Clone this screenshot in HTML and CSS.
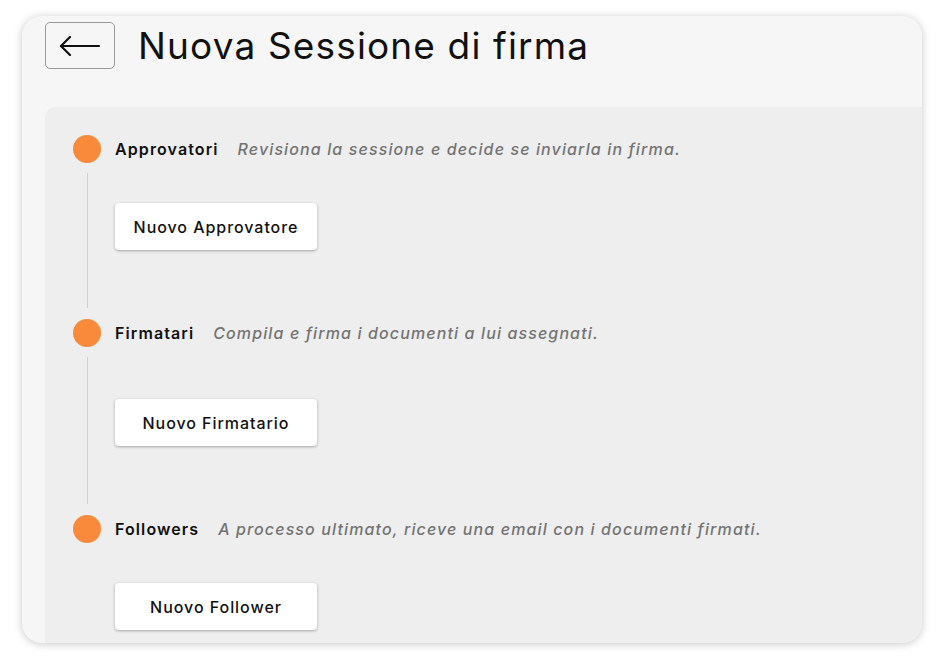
FILE: index.html
```html
<!DOCTYPE html>
<html lang="it">
<head>
<meta charset="utf-8">
<title>Nuova Sessione di firma</title>
<link rel="stylesheet" href="styles.css">
</head>
<body>
<div class="page">
  <div class="card">
    <div class="header">
      <button class="back" aria-label="Indietro">
        <svg width="42" height="20" viewBox="0 0 42 20" fill="none" stroke="#111" stroke-width="2.2" stroke-linecap="round" stroke-linejoin="round">
          <path d="M2 10 H40"/>
          <path d="M11 1 L2 10 L11 19"/>
        </svg>
      </button>
      <h1 class="title">Nuova Sessione di firma</h1>
    </div>
    <div class="panel">
      <div class="step">
        <div class="step-head">
          <span class="dot"></span>
          <span class="step-name">Approvatori</span>
          <span class="step-desc">Revisiona la sessione e decide se inviarla in firma.</span>
        </div>
        <div class="step-body">
          <button class="add-btn">Nuovo Approvatore</button>
        </div>
      </div>
      <div class="step">
        <div class="step-head">
          <span class="dot"></span>
          <span class="step-name">Firmatari</span>
          <span class="step-desc">Compila e firma i documenti a lui assegnati.</span>
        </div>
        <div class="step-body step-body-wide">
          <button class="add-btn">Nuovo Firmatario</button>
        </div>
      </div>
      <div class="step">
        <div class="step-head">
          <span class="dot"></span>
          <span class="step-name">Followers</span>
          <span class="step-desc">A processo ultimato, riceve una email con i documenti firmati.</span>
        </div>
        <div class="step-body step-body-last">
          <button class="add-btn">Nuovo Follower</button>
        </div>
      </div>
    </div>
  </div>
</div>
</body>
</html>
```

FILE: styles.css
```css
* { box-sizing: border-box; }
html, body { margin: 0; padding: 0; background: #ffffff; }
body { font-family: "Inter", "Open Sans", sans-serif; color: #111; }

.page {
  padding: 16px 22px 15px 22px;
  height: 658px;
}
.card {
  height: 627px;
  background: #f6f6f6;
  border-radius: 20px;
  box-shadow: 0 1px 8px rgba(0,0,0,0.22);
  overflow: hidden;
  padding: 6px 0 0 23px;
}
.header {
  display: flex;
  align-items: center;
  gap: 23px;
  height: 47px;
}
.back {
  width: 70px;
  height: 47px;
  border: 1px solid #9a9a9a;
  border-radius: 5px;
  background: transparent;
  display: flex;
  align-items: center;
  justify-content: center;
  padding: 0;
}
.title {
  margin: 0;
  font-size: 37px;
  font-weight: 400;
  color: #111;
  letter-spacing: 1.15px;
}
.panel {
  margin-top: 38px;
  background: #eeeeee;
  border-top-left-radius: 10px;
  height: 600px;
  padding: 28px 0 0 28px;
}
.step-head {
  display: flex;
  align-items: center;
  height: 28px;
}
.dot {
  width: 28px;
  height: 28px;
  border-radius: 50%;
  background: #f98a3c;
  flex: none;
}
.step-name {
  margin-left: 14px;
  font-size: 16px;
  font-weight: 600;
  color: #111;
  letter-spacing: 1.1px;
}
.step-desc {
  margin-left: 19px;
  font-size: 16px;
  font-weight: 500;
  font-style: italic;
  color: #737373;
  letter-spacing: 1.12px;
}
.step-body {
  margin: 10px 0 11px 14px;
  border-left: 1px solid #cfcfcf;
  padding: 30px 0 58px 27px;
}
.step-body-wide { padding-top: 42px; }
.step-body-last { border-left-color: transparent; padding-bottom: 40px; }
.add-btn {
  width: 202px;
  height: 47px;
  background: #ffffff;
  border: none;
  border-radius: 4px;
  box-shadow: 0 1px 3px rgba(0,0,0,0.3);
  font-family: inherit;
  font-size: 16px;
  font-weight: 500;
  color: #111;
  letter-spacing: 0.95px;
  padding: 0;
}
```
